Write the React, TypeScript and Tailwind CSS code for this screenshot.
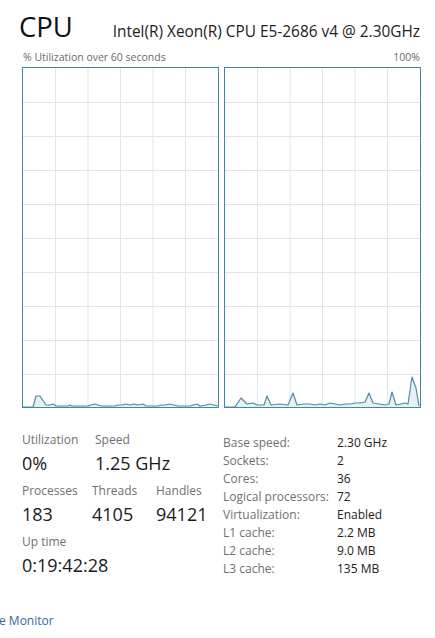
import React from 'react';

const leftPts: [number, number][] = [
  [23, 407], [33, 407], [36, 396], [40, 396], [46, 405], [50, 405], [53, 404], [56, 406],
  [68, 406], [70, 405], [72, 406], [88, 406], [91, 405], [95, 404], [98, 405], [101, 406],
  [115, 406], [118, 405], [122, 405], [126, 404], [130, 405], [134, 404], [138, 405], [143, 404], [146, 406],
  [158, 406], [161, 405], [165, 405], [170, 404], [174, 405], [178, 406],
  [190, 406], [193, 405], [197, 404], [200, 406], [206, 405], [210, 404], [214, 405], [218, 406],
];

const rightPts: [number, number][] = [
  [225, 407], [235, 407], [241, 398], [247, 404], [253, 403], [257, 405], [264, 405],
  [267, 396], [271, 405], [280, 404], [288, 405], [293, 393], [297, 405], [304, 404],
  [310, 404], [315, 405], [320, 404], [325, 405], [330, 403], [335, 404], [340, 405],
  [345, 404], [350, 404], [355, 403], [360, 403], [365, 402], [369, 393], [373, 403],
  [379, 404], [385, 405], [389, 404], [392, 392], [396, 405], [401, 404], [405, 403],
  [408, 404], [412, 377], [416, 388], [419, 406],
];

function Graph({ x0, pts }: { x0: number; pts: [number, number][] }) {
  const inner = 195;
  const line = pts.map((p) => p.join(',')).join(' ');
  const area = `${line} ${x0 + inner},407 ${x0},407`;
  const verts = [1, 2, 3, 4, 5].map((k) => x0 + k * 32.5);
  const hors = [1, 2, 3, 4, 5, 6, 7, 8, 9].map((k) => 68 + k * 34);
  return (
    <div className="w-[197px] h-[341px] border border-[#3f8a9c] bg-white">
      <svg width="195" height="339" viewBox={`${x0} 68 195 339`} className="block">
        {verts.map((v) => (
          <line key={'v' + v} x1={v} y1={68} x2={v} y2={407} stroke="#dce6eb" strokeWidth="1" />
        ))}
        {hors.map((h) => (
          <line key={'h' + h} x1={x0} y1={h + 0.5} x2={x0 + inner} y2={h + 0.5} stroke="#dce6eb" strokeWidth="1" />
        ))}
        <polygon points={area} fill="#e6f0f5" />
        <polyline points={line} fill="none" stroke="#4e8da2" strokeWidth="1.2" strokeLinejoin="round" />
      </svg>
    </div>
  );
}

const specs = [
  ['Base speed:', '2.30 GHz'],
  ['Sockets:', '2'],
  ['Cores:', '36'],
  ['Logical processors:', '72'],
  ['Virtualization:', 'Enabled'],
  ['L1 cache:', '2.2 MB'],
  ['L2 cache:', '9.0 MB'],
  ['L3 cache:', '135 MB'],
];

function Stat({ label, value, w }: { label: string; value: string; w: string }) {
  return (
    <div className={w}>
      <div className="text-[12px] leading-[16px] text-[#707070]">{label}</div>
      <div className="text-[18px] leading-[26px] text-[#1a1a1a] mt-[2px]">{value}</div>
    </div>
  );
}

export default function App() {
  return (
    <div className="w-[435px] h-[638px] bg-white overflow-hidden font-['Open_Sans','Noto_Sans',sans-serif]">
      <div className="pl-[19px] pr-[15px] pt-[9px] flex items-baseline justify-between">
        <span className="text-[27.5px] leading-[36px] text-[#111]">CPU</span>
        <span className="text-[15.4px] text-[#222]">Intel(R) Xeon(R) CPU E5-2686 v4 @ 2.30GHz</span>
      </div>
      <div className="pl-[23px] pr-[15px] mt-[5px] flex justify-between text-[10.5px] leading-[14px] text-[#6a6a6a]">
        <span>% Utilization over 60 seconds</span>
        <span>100%</span>
      </div>
      <div className="pl-[22px] mt-[3px] flex gap-[5px]">
        <Graph x0={23} pts={leftPts} />
        <Graph x0={225} pts={rightPts} />
      </div>
      <div className="pl-[22px] mt-[24px] flex">
        <div className="w-[201px] flex flex-col gap-[7px]">
          <div className="flex">
            <Stat label="Utilization" value="0%" w="w-[73px]" />
            <Stat label="Speed" value="1.25 GHz" w="" />
          </div>
          <div className="flex">
            <Stat label="Processes" value="183" w="w-[70px]" />
            <Stat label="Threads" value="4105" w="w-[64px]" />
            <Stat label="Handles" value="94121" w="" />
          </div>
          <Stat label="Up time" value="0:19:42:28" w="" />
        </div>
        <div className="flex flex-col text-[12px] leading-[18px] pt-[2px]">
          {specs.map(([k, v]) => (
            <div key={k} className="flex">
              <span className="w-[114px] text-[#707070]">{k}</span>
              <span className="text-[#222]">{v}</span>
            </div>
          ))}
        </div>
      </div>
      <div className="mt-[34px] text-[12px] text-[#2f6aa8] -ml-[1px]">e Monitor</div>
    </div>
  );
}
